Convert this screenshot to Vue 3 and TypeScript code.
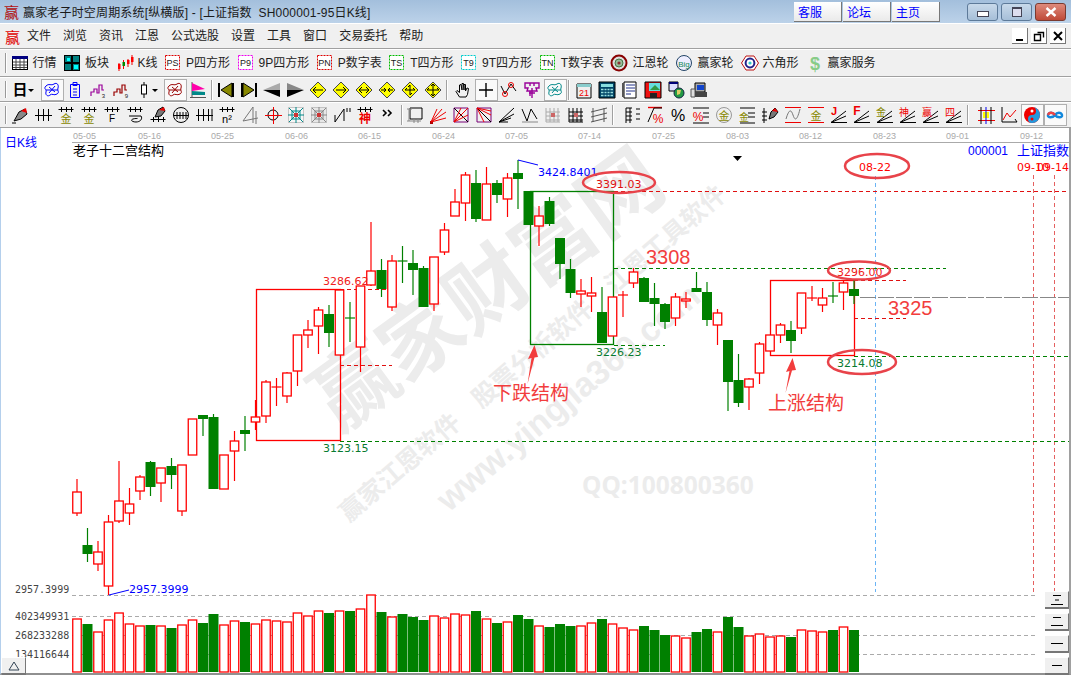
<script setup lang="ts">
// [top, bottom, wickTop, wickBottom, colour] – pixel values of the price pane
type Candle = [number, number, number, number, 'r' | 'g']

const candles: Candle[] = [
  [492, 513, 479, 516, 'r'], [545, 554, 528, 562, 'g'], [552, 564, 541, 571, 'r'], [522, 586, 515, 595, 'r'],
  [501, 521, 461, 523, 'r'], [504, 513, 488, 525, 'r'], [477, 491, 475, 500, 'r'], [462, 487, 461, 496, 'g'],
  [468, 483, 468, 502, 'r'], [466, 475, 458, 489, 'g'], [465, 511, 465, 516, 'r'], [419, 455, 419, 455, 'r'],
  [415, 419, 415, 436, 'g'], [417, 489, 414, 489, 'g'], [455, 489, 455, 489, 'r'], [441, 451, 431, 481, 'r'],
  [430, 434, 416, 451, 'g'], [417, 422, 400, 430, 'r'], [382, 416, 380, 423, 'r'], [387, 387, 378, 406, 'r'],
  [373, 396, 372, 403, 'r'], [335, 371, 335, 386, 'r'], [330, 335, 320, 348, 'r'], [310, 326, 307, 354, 'r'],
  [314, 333, 305, 347, 'g'], [290, 355, 290, 355, 'r'], [318, 318, 302, 342, 'g'], [286, 347, 286, 372, 'r'],
  [271, 285, 222, 286, 'r'], [270, 289, 259, 297, 'g'], [261, 307, 255, 311, 'r'], [261, 261, 246, 283, 'g'],
  [263, 270, 250, 295, 'g'], [268, 307, 266, 307, 'g'], [257, 304, 257, 311, 'r'], [230, 252, 223, 255, 'r'],
  [202, 216, 189, 216, 'r'], [175, 203, 172, 221, 'r'], [183, 219, 170, 222, 'g'], [184, 220, 167, 220, 'r'],
  [183, 195, 180, 203, 'g'], [178, 199, 173, 217, 'r'], [173, 179, 160, 209, 'g'], [191, 225, 191, 225, 'g'],
  [216, 226, 206, 246, 'r'], [201, 224, 197, 226, 'g'], [238, 264, 238, 279, 'g'], [269, 293, 259, 298, 'g'],
  [291, 294, 279, 307, 'r'], [293, 296, 277, 312, 'r'], [312, 343, 287, 343, 'g'], [297, 336, 297, 336, 'r'],
  [295, 295, 291, 317, 'r'], [272, 283, 268, 288, 'r'], [278, 302, 277, 302, 'g'], [298, 304, 283, 326, 'g'],
  [304, 322, 303, 329, 'g'], [297, 318, 293, 326, 'r'], [299, 301, 292, 308, 'r'], [288, 292, 272, 292, 'g'],
  [292, 320, 282, 326, 'g'], [313, 325, 309, 345, 'r'], [340, 382, 340, 411, 'g'], [380, 403, 354, 407, 'g'],
  [379, 387, 378, 410, 'r'], [344, 373, 342, 384, 'r'], [335, 351, 335, 351, 'r'], [325, 335, 323, 343, 'r'],
  [330, 341, 321, 353, 'g'], [293, 328, 293, 334, 'r'], [298, 298, 286, 301, 'r'], [298, 305, 288, 312, 'r'],
  [296, 296, 282, 303, 'g'], [283, 292, 280, 310, 'r'], [289, 296, 280, 304, 'g'],
]

const volumes: [number, 'r' | 'g'][] = [
  [619, 'r'], [624, 'g'], [632, 'r'], [620, 'r'], [613, 'r'], [624, 'r'], [626, 'r'], [625, 'g'], [626, 'r'], [628, 'g'],
  [625, 'r'], [620, 'r'], [623, 'g'], [614, 'g'], [625, 'r'], [621, 'r'], [622, 'g'], [624, 'r'], [620, 'r'], [621, 'r'],
  [622, 'r'], [613, 'r'], [616, 'r'], [611, 'r'], [613, 'g'], [611, 'r'], [611, 'g'], [609, 'r'], [595, 'r'], [612, 'g'],
  [617, 'r'], [614, 'g'], [617, 'g'], [620, 'g'], [616, 'r'], [618, 'r'], [614, 'r'], [615, 'r'], [611, 'g'], [619, 'r'],
  [623, 'g'], [622, 'r'], [615, 'g'], [619, 'g'], [626, 'r'], [627, 'g'], [624, 'g'], [626, 'g'], [626, 'r'], [623, 'r'],
  [619, 'g'], [624, 'r'], [628, 'r'], [630, 'r'], [626, 'g'], [630, 'g'], [635, 'g'], [636, 'r'], [638, 'r'], [632, 'g'],
  [629, 'g'], [632, 'r'], [617, 'g'], [627, 'g'], [636, 'r'], [634, 'r'], [637, 'r'], [636, 'r'], [637, 'g'], [630, 'r'],
  [631, 'r'], [632, 'r'], [630, 'g'], [627, 'r'], [630, 'g'],
]

const cx = (i: number) => 77 + i * 10.5

const dates = [
  [73, '05-05'], [138, '05-16'], [211, '05-25'], [285, '06-06'], [358, '06-15'], [432, '06-24'], [505, '07-05'],
  [578, '07-14'], [652, '07-25'], [726, '08-03'], [799, '08-12'], [873, '08-23'], [946, '09-01'], [1020, '09-12'],
] as const

const menus = ['文件', '浏览', '资讯', '江恩', '公式选股', '设置', '工具', '窗口', '交易委托', '帮助']

// little helpers for the toolbar glyphs
const s = (d: string, c = '#000', w = 1) => `<path d="${d}" stroke="${c}" stroke-width="${w}" fill="none"/>`
const f = (d: string, c: string, o = 'none') => `<path d="${d}" fill="${c}" stroke="${o}"/>`
const t = (x: number, y: number, str: string, c = '#000', size = 9, weight = 400) =>
  `<text x="${x}" y="${y}" fill="${c}" font-size="${size}" font-weight="${weight}" text-anchor="middle" font-family="Liberation Sans,Noto Sans CJK SC,sans-serif">${str}</text>`

const comb = s('M1.5 3.5h15M4.5 1v5M9.5 1v5M14.5 1v5')
const fan = s('M1 16.5h16M1 16.5L16 10M1 16.5L16 5', '#000')
const tag = (label: string, c: string) =>
  `<rect x="1.5" y="1.5" width="14" height="14" fill="#fff" stroke="${c}" stroke-dasharray="2 1"/>` +
  t(8.5, 12, label, '#222', 9)
const blob = (c: string) =>
  s('M3 5c3-3 5 0 8-2s5 1 4 4 2 4-1 6-5-1-7 1-5 0-4-3-3-3 0-6zM6 6l6 5M12 5l-6 7M3 9h12', c)
const steps = (c: string, n: string) => s('M2 15v-4h3v-3h3v4h2V4h3v5h2', c, 1.2) + t(14.5, 17, n, '#222', 6)
const diamond = (arrows: string) =>
  f('M9 1l8 8-8 8-8-8z', '#ff0', '#444') + s(arrows)
const web = (c: string, bg: string) =>
  `<rect x="1.5" y="1.5" width="15" height="15" fill="${bg}" stroke="#999" stroke-dasharray="1 1"/>` +
  s('M5 5h8v8H5zM1 9h16M9 1v16M2 2l14 14M16 2L2 16', c) + f('M7 7h4v4H7z', '#c33')
const grid = (c: string) =>
  s('M2 2v14h14M2 6h14M2 10h14M2 14h14M6 2v14M10 2v14M14 2v14', c) + f('M7 7h4v4H7z', '#c66')

const row1 = [
  { label: '行情', icon: '<rect x="1.5" y="2.5" width="15" height="13" fill="#fff" stroke="#000"/>' + f('M1 2h16v3H1z', '#000080') + s('M2 8h14M2 11h14M2 13.5h14M5 5v10M9 5v10M13 5v10', '#444') },
  { label: '板块', icon: f('M1 1h16v16H1z', '#000') + f('M2 2h6v6H2zM10 2h6v6h-6zM2 10h6v6H2zM10 10h6v6h-6z', '#008080') + f('M4 4h3v3H4zM11 11h4v4h-4z', '#0ff') },
  { label: 'K线', icon: s('M3 9v8M7.5 6v9M12 5v8M16 1v10', '#e00') + f('M2 10h2.5v5H2zM11 6h2.5v4H11zM15 3h2.5v5H15z', '#f00') + f('M6.5 8h2.5v4H6.5z', '#080') },
  { label: 'P四方形', icon: tag('PS', '#d00') },
  { label: '9P四方形', icon: tag('P9', '#e0e') },
  { label: 'P数字表', icon: tag('PN', '#d00') },
  { label: 'T四方形', icon: tag('TS', '#0b0') },
  { label: '9T四方形', icon: tag('T9', '#0cc') },
  { label: 'T数字表', icon: tag('TN', '#0b0') },
  { label: '江恩轮', icon: '<circle cx="9" cy="9" r="7.5" fill="#ddd" stroke="#800" stroke-width="2"/><circle cx="9" cy="9" r="4" fill="#9b9" stroke="#474"/><circle cx="9" cy="9" r="1.6" fill="#833"/>' },
  { label: '赢家轮', icon: '<circle cx="9" cy="9" r="7.5" fill="#eef" stroke="#246"/>' + t(9, 12.5, 'Big', '#185', 8) },
  { label: '六角形', icon: f('M5 2h8l4.5 7-4.5 7H5L.5 9z', '#fff', '#b11') + '<circle cx="9" cy="9" r="4.4" fill="#fff" stroke="#228" stroke-width="2"/><circle cx="9" cy="9" r="1.6" fill="#3cc"/>' },
  { label: '赢家服务', icon: t(9, 15.5, '$', '#8c8', 18, 700) },
]

type Tool = { icon: string; on?: boolean; w?: number; gap?: number }

const row2: Tool[] = [
  { icon: t(9, 14, '日', '#000', 15, 700) },
  { icon: f('M1 8h6l-3 3z', '#000'), w: 9 },
  { icon: blob('#00f'), on: true },
  { icon: s('M4.5 3.5h9v13h-9zM7 1.5h4v3H7zM7 8h4M7 11h4M7 14h4', '#00f') },
  { icon: steps('#909', '3') },
  { icon: steps('#900', '9') },
  { icon: s('M9 1v3M9 13v4') + '<rect x="6.5" y="4" width="5" height="9" fill="#fff" stroke="#000"/>' },
  { icon: f('M1 8h6l-3 3z', '#000'), w: 8 },
  { icon: blob('#900'), on: true },
  { icon: s('M3 1v16M1 16.5h16', '#555') + f('M3 2l13 6-13 2z', '#f0a') + f('M3 10l13 1v3H3z', '#088') },
  { icon: f('M1 2h2v14H1zM15 2h2v14h-2z', '#000') + f('M15 2v14L4 9z', '#880', '#000'), gap: 5 },
  { icon: f('M1 2h2v14H1zM15 2h2v14h-2z', '#000') + f('M3 2v14L14 9z', '#880', '#000') },
  { icon: f('M17 2v7H0z', '#aaa') + f('M17 9v7L0 9z', '#000') },
  { icon: f('M1 2v7h17z', '#888') + f('M1 9v7L18 9z', '#000') },
  { icon: diamond('M4 9h10M4 9l3-3M4 9l3 3') },
  { icon: diamond('M4 9h10M14 9l-3-3M14 9l-3 3') },
  { icon: diamond('M4 9h10M4 9l3-3M4 9l3 3M14 9l-3-3M14 9l-3 3') },
  { icon: diamond('M3 9h5M8 9L6 7M8 9l-2 2M15 9h-5M10 9l2-2M10 9l2 2') },
  { icon: diamond('M9 4v10M4 9h10M4 9l2-2M14 9l-2-2M9 4L7 6M9 14l2-2') },
  { icon: diamond('M9 3v12M3 9h12M9 3L7 5M9 3l2 2M9 15l-2-2M9 15l2-2M3 9l2-2M15 9l-2-2') },
  { icon: s('M5.5 16L2 10.5l1-1 2.5 2V4L7 3.5 8 9V2.5h1.5L10 9V3.5h1.5V10L13 7l1.5.5-1 6-1.5 2.5z'), gap: 7 },
  { icon: s('M9 2v14M2 9h14', '#000', 1.4), on: true },
  { icon: s('M1 5l4 8 6-10 5 7', '#000') + '<circle cx="5" cy="13" r="2.5" fill="none" stroke="#e00"/><circle cx="11" cy="4" r="2.5" fill="none" stroke="#e00"/>' },
  { icon: s('M2 2h14v5h-3l1 3H4l1-3H2zM7 2v3M11 2v3M9 7v10M6 12h6M7 10v5', '#909', 1.4) },
  { icon: blob('#088'), on: true },
  { icon: f('M2 3h14v14H2z', '#eee', '#000') + f('M2 3h14v3H2z', '#8cc') + t(9, 15, '21', '#e00', 9), gap: 6 },
  { icon: f('M1 1h16v16H1z', '#046', '#000') + f('M3 3h12v3H3z', '#8dd') + s('M3 8.5h12M3 11.5h12M3 14.5h12', '#9dd', 1.5) + s('M6 7v9M9 7v9M12 7v9', '#046') },
  { icon: f('M3 1h12v16H3z', '#fff', '#000') + s('M5 4h9M5 7h9M5 10h9M5 13h5', '#238') + f('M1 2h2v14H1z', '#555') },
  { icon: f('M1 1h16v16H1z', '#e11', '#000') + f('M5 2h11v8H5z', '#6dd') + f('M6 12h7v5H6z', '#222') + f('M6 9l5-5 5 5z', '#394') },
  { icon: f('M2 1h9v9H2z', '#ddf', '#000') + f('M2 1h9v2H2z', '#007') + '<circle cx="12" cy="12" r="5" fill="#294" stroke="#124"/>' + f('M10 9h4l-1 4-3 1z', '#dc6') },
  { icon: f('M5 2h10v9H5z', '#aaa', '#000') + f('M7 4h7v5H7z', '#14c') + f('M1 8h4v8H1z', '#ddd', '#555') + f('M5 11h12v5H5z', '#444') },
]

const row3: Tool[] = [
  { icon: f('M3 15l5-9 6-3 2 5-6 5z', '#888', '#000') + f('M10 5l5-3 1 5z', '#e00') + s('M1 17h4') },
  { icon: s('M4.5 3v12M9.5 3v12M14.5 3v12M1 9.5h17') },
  { icon: comb + t(9, 16.5, '金', '#880', 11) },
  { icon: comb + t(9, 16.5, '金', '#880', 11) },
  { icon: comb + t(9, 16, 'F', '#000', 10) },
  { icon: comb + s('M3 10h12c2 3-1 6-5 6s-6-2-3-3 5 0 4-1') },
  { icon: f('M6 11l3-7 5-3 2 4-4 5z', '#777', '#000') + f('M10 4l5-3 1 4z', '#e00') + comb.replace('3.5h15', '13.5h15').replace('M4.5 1v5M9.5 1v5M14.5 1v5', 'M4.5 11v5M9.5 11v5M14.5 11v5') },
  { icon: '<circle cx="9" cy="9" r="7.5" fill="none" stroke="#000"/>' + s('M1.5 9.5h15M5 6v7M8 6v7M11 6v7M14 6v7') },
  { icon: s('M3.5 3v12M8.5 3v12M13.5 3v12M17 3v12M1 9.5h17') },
  { icon: comb + t(9, 17, 'n²', '#000', 11) },
  { icon: s('M2 15L12 1v16M2 15l15-3M15 5v13', '#777') },
  { icon: '<circle cx="9" cy="9" r="5" fill="none" stroke="#000"/>' + s('M1 9.5h17M9.5 1v17', '#e00') },
  { icon: web('#088', '#f6f6f6') },
  { icon: web('#888', '#e6e6e6') },
  { icon: s('M2 16V9M2 16L11 3v12M14 2v4M17 2v4') },
  { icon: comb + t(9, 17, '神', '#e00', 12, 700) },
  { icon: s('M4 4l3 3-3 3M9 4l3 3-3 3', '#000', 1.6) },
  { icon: s('M4 2h12v11H4z') + s('M1 3h5M3 3v12M1 15h14M8 13v4M12 13v4', '#888'), gap: 4 },
  { icon: f('M1 15h3v3H1z', '#a00') + s('M2 16L8 3M2 16L13 3M2 16L17 6M2 16l15-4', '#e00') },
  { icon: s('M2 2h14v14H2z', '#707') + s('M2 2l14 14', '#000') + s('M2 16L16 2M2 16L9 2M2 16l14-7', '#e00') },
  { icon: s('M2 2h14v14H2z', '#707') + s('M2 2l14 14', '#000') + s('M2 2l14 7M2 2l7 14M2 2l14 3', '#e00') },
  { icon: s('M1 16h9M1 16L16 2M1 16l15-8M1 16l12-4') },
  { icon: s('M1 3l5 12 4-12 6 10') + s('M1 16h16', '#888', 1) },
  { icon: grid('#aaa') },
  { icon: grid('#000') },
  { icon: s('M3 2v14M14 2v14M1 6L17 2M1 11l16-4M1 16l16-4', '#555') },
  { icon: s('M3 2v15M3 2h6M3 6h6M3 10h6M3 14h6M7 2v15M13 3h4M13 8h4M13 13h4'), gap: 10 },
  { icon: s('M2 1.5h14', '#e00', 1.4) + s('M2 16L8 2h8') + t(12, 17, '%', '#e00', 12) },
  { icon: t(9, 15, '%', '#000', 16) },
  { icon: s('M1 2h16M11 7h6M11 11h6') + s('M1 17h16') + t(6, 15, '%', '#e00', 12) },
  { icon: '<circle cx="9" cy="9" r="7.5" fill="none" stroke="#999"/>' + t(9, 13.5, '金', '#880', 11) },
  { icon: s('M2 2h15M10 7h7M10 11h7M2 17h15') + t(6, 15, '金', '#880', 10) },
  { icon: s('M3 2v15M1 6h5M1 10h5M1 14h5') + f('M8 13l2-7 4-4 3 4-4 5z', '#777', '#000') + f('M11 5l3-3 3 4z', '#e00') },
  { icon: s('M1 1.5h16M1 16.5h16', '#e00') + s('M2 13c3-10 5-10 7-4s4 6 7-6', '#777') },
  { icon: s('M1 1.5h16M1 16.5h16', '#e00') + t(9, 14, '金', '#880', 11) },
  { icon: fan + t(4, 9, 'J', '#e00', 11, 700) },
  { icon: fan + t(4, 9, 'F', '#e00', 12, 700) },
  { icon: fan + t(5, 10, '金', '#880', 10) },
  { icon: fan + t(5, 10, '神', '#e00', 10) },
  { icon: fan + t(5, 10, '赢', '#e00', 10) },
  { icon: fan + t(5, 10, '四', '#e00', 10) },
  { icon: s('M1 4.5h17M1 14.5h17', '#e00') + s('M4 1v17M14 1v17', '#000') + f('M6 6h6v6H6z', '#ff0') + s('M9 1v17', '#00e'), gap: 9 },
  { icon: s('M2 1v15h15M15 13l2 3') + s('M3 14l4-7 3 4 6-7', '#e00') },
  { icon: '<circle cx="9" cy="9" r="8" fill="#e00"/>' + f('M9 1a4 4 0 010 8 4 4 0 000 8 8 8 0 000-16z', '#29d') + '<circle cx="9" cy="5" r="1.5" fill="#fff"/><circle cx="9" cy="13" r="1.5" fill="#e00"/>', on: true },
  { icon: s('M9 9c-2-3-6-3-7 0s5 3 7 0 6-3 7 0-5 3-7 0', '#18d', 2.4) + s('M2 9c1-3 5-3 7 0', '#e44', 2.4), on: true },
]

const floatRight = [
  { top: 463, icon: 'M5 3.5h8M7 8h4M3 12.5h12' },
  { top: 485, icon: 'M5 3.5h8M3 11.5h12' },
  { top: 507, icon: 'M3 7.5h12' },
  { top: 529, icon: 'M4 7.5h10' },
]
</script>

<template>
  <div class="window">
    <header class="titlebar">
      <span class="logo dark">赢</span>
      <span class="title-text">赢家老子时空周期系统[纵横版] - [上证指数&nbsp;&nbsp;SH000001-95日K线]</span>
      <div class="links">
        <button class="link-btn">客服</button>
        <button class="link-btn">论坛</button>
        <button class="link-btn">主页</button>
      </div>
      <div class="caption">
        <span class="cap-btn"><i class="cap-min"></i></span>
        <span class="cap-btn"><i class="cap-max"></i></span>
        <span class="cap-btn close">
          <svg width="12" height="10" viewBox="0 0 12 10"><path d="M1.5 1l9 8M10.5 1l-9 8" stroke="#fff" stroke-width="2.4" /></svg>
        </span>
      </div>
    </header>

    <nav class="menubar">
      <span class="logo">赢</span>
      <span v-for="m in menus" :key="m" class="menu-item">{{ m }}</span>
      <div class="mdi">
        <span class="mdi-btn"><svg width="12" height="12"><path d="M2 10h7" stroke="#000" stroke-width="2" /></svg></span>
        <span class="mdi-btn"><svg width="12" height="12"><path d="M4.5 2.5h6v5M1.5 4.5h6v6h-6z" stroke="#000" stroke-width="1.4" fill="none" /></svg></span>
        <span class="mdi-btn"><svg width="12" height="12"><path d="M2 2l8 8M10 2l-8 8" stroke="#000" stroke-width="2" /></svg></span>
      </div>
    </nav>

    <div class="toolbar labelled">
      <i class="grip"></i>
      <span v-for="b in row1" :key="b.label" class="labelled-btn">
        <svg class="ico" viewBox="0 0 18 18" v-html="b.icon"></svg>
        <span>{{ b.label }}</span>
      </span>
    </div>

    <div class="toolbar tools">
      <i class="grip"></i>
      <template v-for="(b, i) in row2" :key="i">
        <i v-if="b.gap" class="sep" :style="{ width: b.gap + 'px' }"></i>
        <span class="tool" :class="{ on: b.on }" :style="b.w ? { width: b.w + 'px' } : undefined">
          <svg class="ico" viewBox="0 0 18 18" v-html="b.icon"></svg>
        </span>
      </template>
    </div>

    <div class="toolbar tools last">
      <i class="grip"></i>
      <template v-for="(b, i) in row3" :key="i">
        <i v-if="b.gap" class="sep" :style="{ width: b.gap + 'px' }"></i>
        <span class="tool" :class="{ on: b.on }">
          <svg class="ico" viewBox="0 0 18 18" v-html="b.icon"></svg>
        </span>
      </template>
    </div>

    <main class="chart">
      <svg class="plot" viewBox="0 128 1071 545" width="1071" height="545">
        <!-- watermark -->
        <g class="wm">
          <text class="wm-big" transform="rotate(-36 488 290)" x="488" y="318">赢家财富网</text>
          <text class="wm-mid" transform="rotate(-40.7 533 354)" x="533" y="362">赢家江恩软件　股票分析软件　江恩工具软件</text>
          <text class="wm-url" transform="rotate(-40 568 397)" x="568" y="409">www.yingjia360.com</text>
          <text class="wm-qq" x="582" y="494">QQ:100800360</text>
        </g>

        <!-- axis -->
        <line x1="72" y1="142.5" x2="1069" y2="142.5" class="axis" />
        <text v-for="d in dates" :key="d[1]" :x="d[0]" y="139" class="date">{{ d[1] }}</text>
        <text x="5" y="147" class="blue-label">日K线</text>
        <text x="73" y="155" class="sys-title">老子十二宫结构</text>
        <text x="968" y="155" class="blue-label">000001</text>
        <text x="1017" y="155" class="blue-label wide">上证指数</text>
        <path d="M733 156h9l-4.5 5z" fill="#000" />

        <!-- grid of the volume pane -->
        <path d="M72 595.5h965M72 616.5h965M72 635.5h965M72 654.5h965" class="grid" />
        <text x="15" y="593" class="scale">2957.3999</text>
        <text x="15" y="620" class="scale">402349931</text>
        <text x="15" y="639" class="scale">268233288</text>
        <text x="15" y="658" class="scale">134116644</text>

        <!-- guide lines and boxes -->
        <path d="M875.5 176V592" class="dash" stroke="#6ab4f5" />
        <path d="M1033.5 175V592M1054.5 175V592" class="dash" stroke="#e56060" />
        <path d="M614 191.5H1066M340 289.5H392M340 365.5H392M854 280.5H906M854 318.5H906" class="dash" stroke="#e01010" />
        <path d="M614 268.5H946M614 345.5H665M340 441.5H1069M854 356.5H1069" class="dash" stroke="#008000" />
        <path d="M860 297.5H1069" class="dash long" stroke="#888" />

        <rect x="256.5" y="289.5" width="84" height="151" class="box" stroke="#f00" />
        <rect x="530.5" y="191.5" width="83" height="153" class="box" stroke="#008000" />
        <rect x="770.5" y="280.5" width="84" height="75" class="box" stroke="#f00" />

        <!-- volume -->
        <rect
          v-for="(v, i) in volumes"
          :key="'v' + i"
          :x="v[1] === 'r' ? cx(i) - 4.25 : cx(i) - 5"
          :y="v[0]"
          :width="v[1] === 'r' ? 8.5 : 10"
          :height="672 - v[0]"
          :class="v[1] === 'r' ? 'up' : 'down'"
        />

        <!-- candles -->
        <g v-for="(c, i) in candles" :key="'c' + i">
          <line :x1="cx(i)" :x2="cx(i)" :y1="c[2]" :y2="c[3]" :class="c[4] === 'r' ? 'wick-r' : 'wick-g'" />
          <line v-if="c[0] === c[1]" :x1="cx(i) - 5" :x2="cx(i) + 5" :y1="c[0]" :y2="c[0]" :class="c[4] === 'r' ? 'wick-r' : 'wick-g'" />
          <rect
            v-else
            :x="c[4] === 'r' ? cx(i) - 4.25 : cx(i) - 5"
            :y="c[0]"
            :width="c[4] === 'r' ? 8.5 : 10"
            :height="c[1] - c[0]"
            :class="c[4] === 'r' ? 'up' : 'down'"
          />
        </g>

        <!-- high / low markers -->
        <path d="M518 160l20 5M109 595l20-5" stroke="#00f" fill="none" />
        <text x="538" y="176" class="num" fill="#00f">3424.8401</text>
        <text x="129" y="593" class="num" fill="#00f">2957.3999</text>
        <text x="323" y="285" class="num" fill="#f02020">3286.62</text>
        <text x="323" y="452" class="num" fill="#087a30">3123.15</text>
        <text x="596" y="188" class="num" fill="#e01010">3391.03</text>
        <text x="596" y="356" class="num" fill="#087a30">3226.23</text>
        <text x="837" y="276" class="num" fill="#f02020">3296.00</text>
        <text x="837" y="367" class="num" fill="#087a30">3214.08</text>
        <text x="859" y="171" class="num" fill="#f00">08-22</text>
        <text x="1017" y="171" class="num" fill="#f00">09-10</text>
        <text x="1037" y="171" class="num" fill="#f00">09-14</text>

        <!-- hand drawn annotations -->
        <ellipse cx="877" cy="166" rx="32" ry="12" class="mark" />
        <ellipse cx="619" cy="182.5" rx="36" ry="10.5" class="mark" />
        <ellipse cx="859" cy="270.5" rx="31" ry="9" class="mark" />
        <ellipse cx="862" cy="362" rx="34" ry="12" class="mark" />
        <text x="646" y="264" class="note-num">3308</text>
        <text x="888" y="315" class="note-num">3325</text>
        <text x="493" y="400" class="note">下跌结构</text>
        <text x="768" y="410" class="note">上涨结构</text>
        <path d="M527.5 384L531.5 358 528 359 534.5 345 538 357 534.5 357.5z" fill="#f23d3d" />
        <path d="M785.5 393L789.5 371 786 372 792.5 358 796 370 792 370.5z" fill="#f23d3d" />
      </svg>

      <span class="side-btn left-btn">
        <svg width="12" height="10" viewBox="0 0 12 10"><path d="M6 1l5 8H1z" fill="none" stroke="#345" /></svg>
      </span>
      <span v-for="b in floatRight" :key="b.top" class="side-btn right-btn" :style="{ top: b.top + 'px' }">
        <svg width="18" height="15" viewBox="0 0 18 15"><path :d="b.icon" stroke="#000" fill="none" /></svg>
      </span>
    </main>
  </div>
</template>

<style scoped>
.window {
  width: 1071px;
  height: 675px;
  overflow: hidden;
  display: flex;
  flex-direction: column;
  background: #f0f0f0;
  font-family: "Liberation Sans", "Noto Sans CJK SC", sans-serif;
  font-size: 12px;
  color: #222;
}

.titlebar {
  height: 23px;
  flex: none;
  display: flex;
  align-items: center;
  padding-left: 4px;
  background: linear-gradient(#a3bfdc, #bcd2e9);
}

.logo {
  width: 15px;
  font-family: "Noto Sans CJK SC", sans-serif;
  font-size: 15px;
  line-height: 1;
  color: #e00000;
  text-align: center;
}

.logo.dark {
  color: #b01010;
}

.title-text {
  margin-left: 4px;
  font-size: 12px;
  letter-spacing: 0.17px;
  color: #1a1a1a;
  white-space: nowrap;
}

.links {
  margin-left: auto;
  display: flex;
  gap: 1px;
  align-items: center;
}

.link-btn {
  width: 48px;
  height: 20px;
  padding: 0 0 0 4px;
  border: none;
  border-right: 1px solid #777;
  border-bottom: 1px solid #777;
  background: linear-gradient(#fff, #eaeaea);
  color: #0000ff;
  font: inherit;
  text-align: left;
}

.caption {
  margin-left: 27px;
  margin-right: 5px;
  display: flex;
  gap: 3px;
}

.cap-btn {
  width: 31px;
  height: 18px;
  display: flex;
  align-items: center;
  justify-content: center;
  border: 1px solid #5d7a99;
  border-radius: 3px;
  box-sizing: border-box;
  background: linear-gradient(#c8d9ea, #a6bfd8);
}

.cap-btn.close {
  border-color: #7a3a30;
  background: linear-gradient(#de8a7c, #bf4a38);
}

.cap-min {
  width: 10px;
  height: 4px;
  margin-top: 4px;
  border: 1px solid #445;
  background: #fff;
}

.cap-max {
  width: 8px;
  height: 7px;
  border: 1px solid #445;
  border-top-width: 2px;
  background: #dde;
  box-sizing: content-box;
}

.menubar {
  height: 24px;
  flex: none;
  display: flex;
  align-items: center;
  padding-left: 5px;
  border-top: 1px solid #fff;
  border-bottom: 1px solid #a0a0a0;
}

.menu-item {
  margin-left: 12px;
  line-height: 1;
}

.menu-item:nth-of-type(2) {
  margin-left: 7px;
}

.mdi {
  margin-left: auto;
  margin-right: 5px;
  display: flex;
  gap: 3px;
}

.mdi-btn {
  width: 15px;
  height: 15px;
  display: flex;
  align-items: center;
  justify-content: center;
  background: #fff;
  border-right: 1px solid #777;
  border-bottom: 1px solid #777;
}

.toolbar {
  flex: none;
  display: flex;
  align-items: center;
  position: relative;
  border-top: 1px solid #fff;
  border-bottom: 1px solid #a0a0a0;
  padding-left: 8.5px;
}

.labelled {
  height: 26px;
}

.tools {
  height: 23px;
}

.tools.last {
  height: 24px;
}

.grip {
  position: absolute;
  left: 5px;
  top: 3px;
  bottom: 3px;
  width: 1px;
  background: #999;
  border-right: 1px solid #fff;
}

.labelled-btn {
  display: flex;
  align-items: center;
  gap: 4px;
  margin-right: 6.5px;
  white-space: nowrap;
  line-height: 1;
  font-size: 12px;
}

.labelled-btn:first-of-type {
  margin-left: 2px;
}

.labelled-btn:nth-of-type(n + 10) {
  margin-right: 7px;
}

.labelled-btn .ico {
  flex: none;
}

.tool {
  width: 23px;
  height: 22px;
  flex: none;
  display: flex;
  align-items: center;
  justify-content: center;
  box-sizing: border-box;
}

.tool.on {
  background: #fafafa;
  border: 1px solid #b0b0b0;
}

.sep {
  flex: none;
  height: 20px;
  position: relative;
}

.sep::before {
  content: "";
  position: absolute;
  left: 1px;
  top: 0;
  bottom: 0;
  width: 1px;
  background: #a0a0a0;
  box-shadow: 1px 0 0 #fff;
}

.ico {
  width: 18px;
  height: 18px;
  overflow: visible;
}

.chart {
  flex: 1;
  position: relative;
  background: #fff;
  border-left: 1px solid #b4cfec;
  border-right: 2px solid #a0a0a0;
  border-bottom: 2px solid #909090;
}

.plot {
  position: absolute;
  left: -1px;
  top: 0;
  display: block;
  font-family: "DejaVu Sans", sans-serif;
}

.wm text {
  fill: #ececec;
  font-family: "Noto Sans CJK SC", sans-serif;
  font-weight: 700;
  text-anchor: middle;
}

.wm .wm-big {
  font-size: 82px;
}

.wm .wm-mid {
  font-size: 25px;
}

.wm .wm-url {
  font-size: 34px;
  font-family: "Liberation Sans", sans-serif;
}

.wm .wm-qq {
  font-size: 24.5px;
  text-anchor: start;
  font-family: "Noto Sans", sans-serif;
}

.axis {
  stroke: #aaa;
}

.date {
  font-family: "Liberation Sans", sans-serif;
  font-size: 9px;
  fill: #aaa;
}

.blue-label {
  font-family: "Liberation Sans", "Noto Sans CJK SC", sans-serif;
  font-size: 12px;
  fill: #0000ff;
}

.blue-label.wide {
  font-size: 13px;
}

.sys-title {
  font-family: "Noto Sans CJK SC", sans-serif;
  font-size: 13px;
  fill: #000;
}

.scale {
  font-family: "DejaVu Sans Mono", monospace;
  font-size: 10px;
  fill: #444;
}

.grid {
  fill: none;
  stroke: #aaa;
  stroke-dasharray: 4 3;
}

.dash {
  fill: none;
  stroke-dasharray: 4 3;
}

.dash.long {
  stroke-dasharray: 16 2;
}

.box {
  fill: none;
  stroke-width: 1.3;
}

.up {
  fill: #fff;
  stroke: #f00;
  stroke-width: 1.3;
}

.down {
  fill: #008000;
}

.wick-r {
  stroke: #f00;
  stroke-width: 1.2;
}

.wick-g {
  stroke: #008000;
  stroke-width: 1.2;
}

.num {
  font-family: "DejaVu Sans", sans-serif;
  font-size: 11px;
}

.mark {
  fill: none;
  stroke: #e8434a;
  stroke-width: 2.5;
}

.note-num {
  font-family: "Liberation Sans", sans-serif;
  font-size: 20px;
  fill: #f23d3d;
}

.note {
  font-family: "Noto Sans CJK SC", sans-serif;
  font-size: 19px;
  fill: #f23d3d;
}

.side-btn {
  position: absolute;
  display: flex;
  align-items: center;
  justify-content: center;
  width: 23px;
  height: 15px;
  background: #f0f0f0;
  border-top: 1px solid #fff;
  border-bottom: 2px solid #777;
  border-right: 1px solid #777;
}

.left-btn {
  left: 1px;
  top: 529px;
}

.right-btn {
  right: 0;
}
</style>

<style>
html,
body {
  margin: 0;
  overflow: hidden;
}
</style>
